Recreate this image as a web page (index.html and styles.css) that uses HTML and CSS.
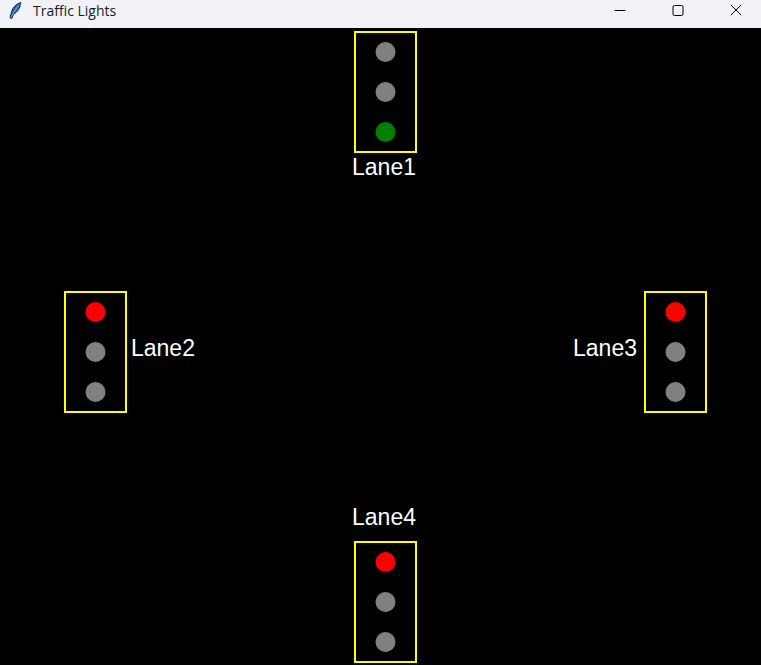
FILE: index.html
```html
<!DOCTYPE html>
<html>
<head>
<meta charset="utf-8">
<title>Traffic Lights</title>
<link rel="stylesheet" href="styles.css">
</head>
<body>
<div class="window">
  <div class="titlebar">
    <div class="title-left">
      <svg class="app-icon" width="14" height="18" viewBox="0 0 14 18">
        <path d="M12.8 0.6 C8.5 1.8 4.8 5.2 3.6 9.5 L2 15.8 L3.9 16.4 L5.6 12 C9.5 10.4 12.2 5.8 12.8 0.6 Z" fill="#2f66b8" stroke="#0f2447" stroke-width="1"/>
        <path d="M11.8 2 C9 5 6.6 8.5 3.2 15.6" stroke="#9cc0ee" stroke-width="0.7" fill="none"/>
      </svg>
      <span class="title-text">Traffic Lights</span>
    </div>
    <div class="controls">
      <div class="ctrl">
        <svg width="12" height="12" viewBox="0 0 12 12"><path d="M0.5 6.5 H11.5" stroke="#000" stroke-width="1"/></svg>
      </div>
      <div class="ctrl">
        <svg width="12" height="12" viewBox="0 0 12 12"><rect x="1" y="1.5" width="10" height="10" rx="1.5" fill="none" stroke="#000" stroke-width="1"/></svg>
      </div>
      <div class="ctrl">
        <svg width="12" height="12" viewBox="0 0 12 12"><path d="M0.8 0.8 L11.2 11.2 M11.2 0.8 L0.8 11.2" stroke="#000" stroke-width="1"/></svg>
      </div>
    </div>
  </div>
  <div class="canvas">
    <svg class="scene" width="761" height="637" viewBox="0 28 761 637">
      <g class="light">
        <rect class="housing" x="355" y="32" width="61" height="120"/>
        <circle class="off" cx="385.5" cy="52" r="10"/>
        <circle class="off" cx="385.5" cy="92" r="10"/>
        <circle class="green" cx="385.5" cy="132" r="10"/>
      </g>
      <text class="label" x="384" y="175" text-anchor="middle">Lane1</text>

      <g class="light">
        <rect class="housing" x="65" y="292" width="61" height="120"/>
        <circle class="red" cx="95.5" cy="312" r="10"/>
        <circle class="off" cx="95.5" cy="352" r="10"/>
        <circle class="off" cx="95.5" cy="392" r="10"/>
      </g>
      <text class="label" x="131" y="356" text-anchor="start">Lane2</text>

      <g class="light">
        <rect class="housing" x="645" y="292" width="61" height="120"/>
        <circle class="red" cx="675.5" cy="312" r="10"/>
        <circle class="off" cx="675.5" cy="352" r="10"/>
        <circle class="off" cx="675.5" cy="392" r="10"/>
      </g>
      <text class="label" x="637" y="356" text-anchor="end">Lane3</text>

      <text class="label" x="384" y="525" text-anchor="middle">Lane4</text>
      <g class="light">
        <rect class="housing" x="355" y="542" width="61" height="120"/>
        <circle class="red" cx="385.5" cy="562" r="10"/>
        <circle class="off" cx="385.5" cy="602" r="10"/>
        <circle class="off" cx="385.5" cy="642" r="10"/>
      </g>
    </svg>
  </div>
</div>
</body>
</html>
```
FILE: styles.css
```css
html, body {
  margin: 0;
  padding: 0;
  width: 761px;
  height: 665px;
  overflow: hidden;
  background: #000;
}
.window {
  display: flex;
  flex-direction: column;
  width: 761px;
  height: 665px;
}
.titlebar {
  height: 28px;
  flex: 0 0 28px;
  background: #f1f2f7;
  display: flex;
  align-items: flex-start;
  justify-content: space-between;
}
.title-left {
  display: flex;
  align-items: flex-start;
  padding-left: 8px;
  padding-top: 1px;
  gap: 11px;
}
.app-icon {
  display: block;
  margin-top: 1px;
}
.title-text {
  font-family: "Open Sans", "Noto Sans", sans-serif;
  font-size: 14px;
  line-height: 18px;
  color: #1a1a1a;
  margin-top: 1px;
}
.controls {
  display: flex;
  gap: 8px;
  height: 28px;
}
.ctrl {
  width: 50px;
  height: 28px;
  display: flex;
  align-items: flex-start;
  justify-content: center;
  padding-top: 4px;
  box-sizing: border-box;
}
.ctrl svg {
  display: block;
}
.canvas {
  flex: 1 1 auto;
  background: #000;
}
.scene {
  display: block;
}
.housing {
  fill: none;
  stroke: #ffff00;
  stroke-width: 2;
}
.off { fill: #808080; }
.red { fill: #ff0000; }
.green { fill: #008000; }
.label {
  fill: #ffffff;
  font-family: "Liberation Sans", Arial, sans-serif;
  font-size: 23px;
}
```
